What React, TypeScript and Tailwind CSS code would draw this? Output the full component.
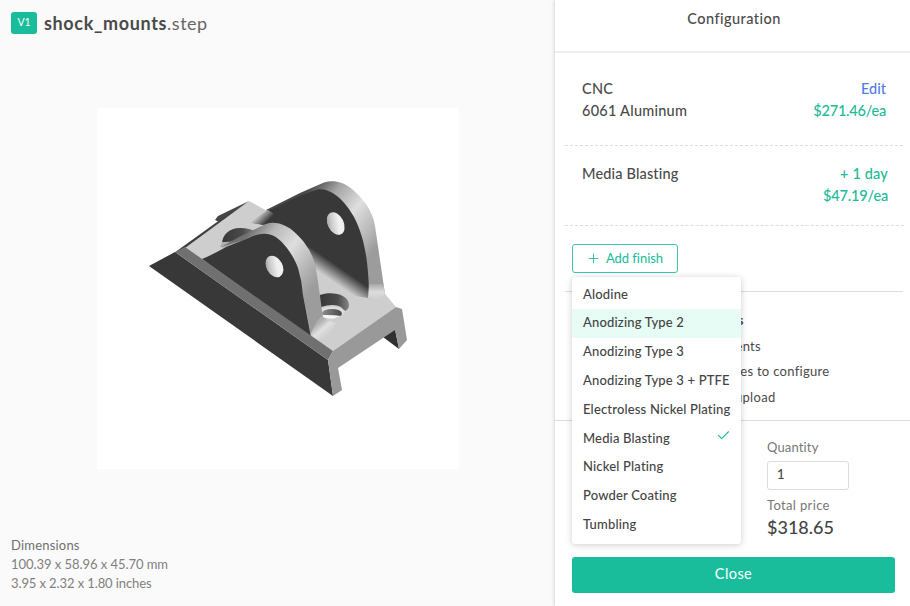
import React from "react";
import { Plus, Check } from "lucide-react";

const finishes = [
  "Alodine",
  "Anodizing Type 2",
  "Anodizing Type 3",
  "Anodizing Type 3 + PTFE",
  "Electroless Nickel Plating",
  "Media Blasting",
  "Nickel Plating",
  "Powder Coating",
  "Tumbling",
];

function PartModel() {
  return (
    <svg viewBox="97 108 362 361" className="block h-[361px] w-[362px] bg-white" aria-label="Shock mount">
      <defs>
        <linearGradient id="frontRim" gradientUnits="userSpaceOnUse" x1="250" y1="230" x2="318" y2="282">
          <stop offset="0" stopColor="#707070" />
          <stop offset="0.22" stopColor="#b8b8b8" />
          <stop offset="0.5" stopColor="#dedede" />
          <stop offset="0.85" stopColor="#adadad" />
          <stop offset="1" stopColor="#9c9c9c" />
        </linearGradient>
        <linearGradient id="rearRim" gradientUnits="userSpaceOnUse" x1="308" y1="190" x2="378" y2="245">
          <stop offset="0" stopColor="#484848" />
          <stop offset="0.25" stopColor="#a5a5a5" />
          <stop offset="0.55" stopColor="#dedede" />
          <stop offset="0.88" stopColor="#b0b0b0" />
          <stop offset="1" stopColor="#9c9c9c" />
        </linearGradient>
        <linearGradient id="bore" x1="0" y1="0" x2="1" y2="0.5">
          <stop offset="0" stopColor="#8c8c8c" />
          <stop offset="0.35" stopColor="#c8c8c8" />
          <stop offset="0.75" stopColor="#f0f0f0" />
        </linearGradient>
        <linearGradient id="floor" gradientUnits="userSpaceOnUse" x1="344" y1="270" x2="335" y2="283">
          <stop offset="0" stopColor="#383838" />
          <stop offset="1" stopColor="#cecece" />
        </linearGradient>
        <linearGradient id="sink" x1="0" y1="0" x2="1" y2="0">
          <stop offset="0" stopColor="#383838" />
          <stop offset="0.6" stopColor="#4a4a4a" />
          <stop offset="1" stopColor="#858585" />
        </linearGradient>
        <linearGradient id="counterbore" x1="0" y1="0" x2="1" y2="0">
          <stop offset="0" stopColor="#8c8c8c" />
          <stop offset="1" stopColor="#484848" />
        </linearGradient>
        <linearGradient id="rearFoot" gradientUnits="userSpaceOnUse" x1="259" y1="214" x2="267" y2="222">
          <stop offset="0" stopColor="#cecece" />
          <stop offset="1" stopColor="#383838" />
        </linearGradient>
        <linearGradient id="fillet" gradientUnits="userSpaceOnUse" x1="315" y1="326" x2="325" y2="338">
          <stop offset="0" stopColor="#b0b0b0" />
          <stop offset="0.45" stopColor="#e0e0e0" />
          <stop offset="1" stopColor="#cecece" />
        </linearGradient>
        <linearGradient id="rearFillet" gradientUnits="userSpaceOnUse" x1="377" y1="284" x2="377" y2="300">
          <stop offset="0" stopColor="#a8a8a8" />
          <stop offset="0.5" stopColor="#dddddd" />
          <stop offset="1" stopColor="#cecece" />
        </linearGradient>
      </defs>
      <path d="M174 253L249 201L218 216L215 220L219 222Z" fill="#454545" />
      <path d="M184 248L249 201L269 212L320 246L385 294L396 307L333 351L310 335Z" fill="#cecece" />
      <path d="M174 253L217 222L249 201L185 248Z" fill="#3e3e3e" />
      <path d="M222 244C222 235 229 228 240 228Q250 228 256 232L225 246Z" fill="url(#sink)" />
      <path d="M220 247L222 242Q233 243 248 235L252 237L226 248Z" fill="#b0b0b0" />
      <path d="M266 210L300 193L324 182.500C333 179.500 343 182 350 187.500C363 198 373 211 375 226L385 294L376 299L367 298L362 280Z" fill="url(#rearRim)" />
      <path d="M252 223L268 211L300 196L317 189.500C330 187 345 200 354 217C365 238 368 262 369 290L308 249L280 225Z" fill="#383838" />
      <path d="M250 222L268 210L279 217L275 224L262 225Z" fill="url(#rearFoot)" />
      <path d="M308 246L369 288V298L354 296L318 280Z" fill="url(#floor)" />
      <path d="M369 284H383.500L385 294L377 300L368 298Z" fill="url(#rearFillet)" />
      <ellipse cx="335.7" cy="223.500" rx="8" ry="12" transform="rotate(-26 335.7 223.5)" fill="url(#bore)" />
      <path d="M320 304V295C331 291 349 294 349 305Q349 309 345 311L341 307Q334 303 321 307Z" fill="url(#sink)" />
      <path d="M320 309Q334 303 345 311L343 315L341 313Q334 307 322 312Z" fill="#dedede" />
      <ellipse cx="332" cy="313.500" rx="10" ry="4.500" fill="url(#counterbore)" />
      <path d="M323 315Q332 314.500 341 316L336 318Q330 320 323 317Z" fill="#f6f6f6" />
      <path d="M221 247L240 236.500L266 224C274 221 284 224 292 230C303 239 311 250 315 264Q318 279 323 319L323 330L311 335L300 280L284 250L260 235Z" fill="url(#frontRim)" />
      <path d="M310.500 335Q314 323 322 316Q327 321 336 323L325 346Z" fill="url(#fillet)" />
      <path d="M202 259Q212 255 226 247L250 237.500Q261 232 270 234.500C280 237 292 252 298 268Q302 281 303 295L311 337Z" fill="#383838" />
      <ellipse cx="274.500" cy="266.500" rx="8" ry="11.500" transform="rotate(-28 274.5 266.5)" fill="url(#bore)" />
      <path d="M149 266L175 252L328 360L333 396Z" fill="#383838" />
      <path d="M175 252L185 247L333 351L328 360Z" fill="#707070" />
      <path d="M383 337L395 329L399 349Z" fill="#303030" />
      <path d="M328 360L333 351L396 307L402 309L407 340L399 349L395 330L338 368L342 390L333 396Z" fill="#999999" />
    </svg>
  );
}

function FinishMenu() {
  return (
    <ul className="absolute top-[33px] left-0 z-10 h-[267px] w-[169px] rounded-[3px] bg-white pt-[3px] shadow-[0_1px_7px_rgba(0,0,0,0.2)]">
      {finishes.map((name) => (
        <li
          key={name}
          className={`flex h-[28.8px] items-center justify-between pr-[10px] pl-[11px] text-[13px] font-medium whitespace-nowrap text-[#444] ${
            name === "Anodizing Type 2" ? "bg-[#e6fcf5]" : ""
          }`}
        >
          <span className="tracking-[0.17px]">{name}</span>
          {name === "Media Blasting" && <Check className="mb-[6px] size-[15px] text-[#19bd9b]" strokeWidth={1.8} />}
        </li>
      ))}
    </ul>
  );
}

export default function App() {
  return (
    <div className="flex h-[606px] w-[910px] overflow-hidden bg-[#fafafa] font-[Lato,sans-serif] text-[#4a4a4a]">
      <main className="flex w-[555px] shrink-0 flex-col">
        <header className="flex h-[46px] items-center pl-[11px]">
          <span className="flex h-[22px] w-[26px] items-center justify-center rounded-[3px] bg-[#19bd9b] text-[10.5px] text-white">V1</span>
          <h1 className="ml-[7px] text-[18px] leading-6">
            <span className="font-bold tracking-[0.65px]">shock_mounts</span>
            <span className="tracking-[0.5px] text-[#666]">.step</span>
          </h1>
        </header>
        <div className="mt-[62px] ml-[97px]">
          <PartModel />
        </div>
        <div className="mt-[67px] ml-[11px] text-[13px] leading-[19px] text-[#808080]">
          <p className="tracking-[0.2px] text-[#707070]">Dimensions</p>
          <p className="tracking-[-0.05px]">100.39 x 58.96 x 45.70 mm</p>
          <p className="tracking-[-0.1px]">3.95 x 2.32 x 1.80 inches</p>
        </div>
      </main>

      <aside className="flex w-[355px] shrink-0 flex-col bg-white shadow-[0_0_4px_rgba(0,0,0,0.22)]">
        <h2 className="flex h-[53px] shrink-0 justify-center border-b-2 border-[#eee] pt-[9px] pl-[3px] text-[14.5px] leading-5 font-medium tracking-[0.45px]">Configuration</h2>

        <section className="mr-[7px] ml-[10px] flex h-[93px] shrink-0 justify-between border-b border-dashed border-[#ddd] pt-[25px] pr-[17px] pl-[17px] text-[14.5px] leading-[22px] font-medium">
          <div className="tracking-[0.25px]">
            <p>CNC</p>
            <p>6061 Aluminum</p>
          </div>
          <div className="text-right">
            <p className="text-[#4f7be8]">Edit</p>
            <p className="tracking-[-0.2px] text-[#20ba98]">$271.46/ea</p>
          </div>
        </section>

        <section className="mr-[6px] ml-[10px] flex h-[80px] shrink-0 justify-between border-b border-dashed border-[#ddd] pt-[17px] pr-[16px] pl-[17px] text-[14.5px] leading-[22px] font-medium">
          <p className="tracking-[0.15px]">Media Blasting</p>
          <div className="text-right text-[#20ba98]">
            <p className="tracking-[0.15px]">+ 1 day</p>
            <p className="tracking-[-0.15px]">$47.19/ea</p>
          </div>
        </section>

        <div className="mr-[7px] ml-[10px] h-[66px] shrink-0 border-b border-[#ddd] pt-[18px] pl-[7px]">
          <div className="relative w-[106px]">
            <button className="flex h-[29px] w-[106px] items-center rounded-[3px] border border-[#3cc6a9] pl-[13px] text-[13px] whitespace-nowrap text-[#20ba98]">
              <Plus className="mr-[5px] size-[15px]" strokeWidth={1.4} />
              <span className="tracking-[-0.05px]">Add finish</span>
            </button>
            <FinishMenu />
          </div>
        </div>

        <section className="flex h-[129px] shrink-0 flex-col items-start border-b border-[#ddd] pt-[16px] text-[13px] leading-[25.5px]">
          <p className="w-[188.5px] text-right font-bold">s</p>
          <p className="w-[206px] text-right tracking-[0.3px]">ents</p>
          <p className="w-[274.5px] text-right tracking-[0.3px]">les to configure</p>
          <p className="w-[220.5px] text-right leading-[25px] tracking-[0.3px]">upload</p>
        </section>

        <section className="ml-[212px] flex h-[136px] shrink-0 flex-col pt-[16px] text-[13px] text-[#777]">
          <label className="leading-5 tracking-[0.15px]" htmlFor="quantity">Quantity</label>
          <input id="quantity" defaultValue="1" className="mt-[4px] h-[29px] w-[82px] rounded-[3px] border border-[#ddd] bg-white px-[9px] pb-[3px] text-[13px] font-medium text-[#444]" />
          <p className="mt-[5px] leading-5 tracking-[0.35px]">Total price</p>
          <p className="leading-6"><span className="text-[18px] font-medium text-[#444]">$318.65</span></p>
        </section>

        <button className="ml-[17px] h-[36px] w-[323px] shrink-0 rounded-[3px] bg-[#19bd9b] pb-[2px] text-[14.5px] tracking-[0.4px] text-white">Close</button>
      </aside>
    </div>
  );
}
